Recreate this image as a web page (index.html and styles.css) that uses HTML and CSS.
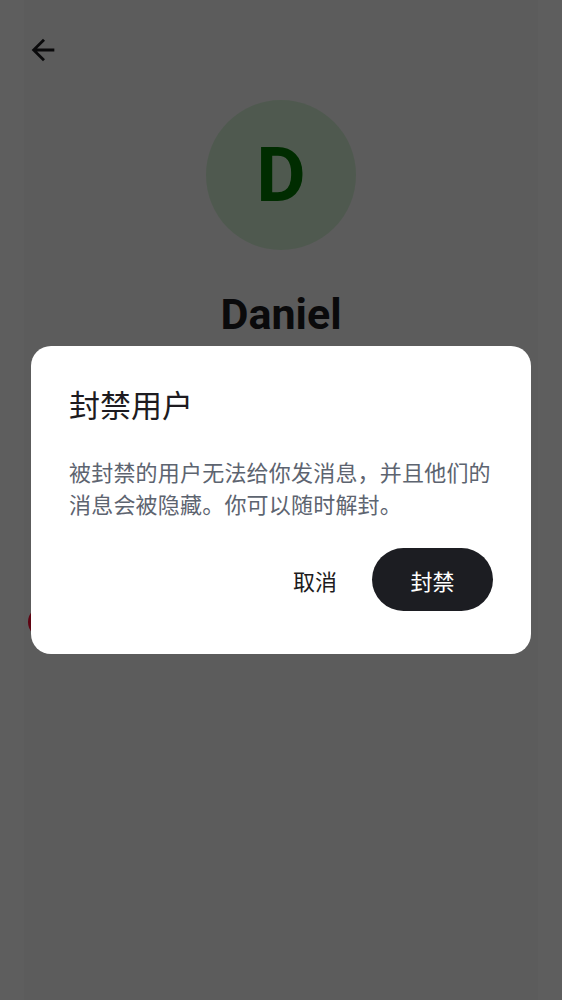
FILE: index.html
```html
<!DOCTYPE html>
<html lang="zh-CN">
<head>
<meta charset="utf-8">
<title>Daniel</title>
<link rel="stylesheet" href="styles.css">
</head>
<body>
<div class="page">
  <header class="topbar">
    <button class="back" aria-label="返回">
      <svg viewBox="0 0 24 24" width="34" height="34"><path d="M20 11H7.83l5.59-5.59L12 4l-8 8 8 8 1.41-1.41L7.83 13H20v-2z" fill="#1c1b1f"/></svg>
    </button>
  </header>
  <section class="profile">
    <div class="avatar">D</div>
    <h1 class="name">Daniel</h1>
  </section>
  <div class="actions">
    <div class="action danger">
      <span class="action-icon"></span>
      <span class="action-label">封禁用户</span>
    </div>
  </div>
</div>
<div class="scrim">
  <div class="dialog" role="dialog">
    <h2 class="dialog-title">封禁用户</h2>
    <p class="dialog-body">被封禁的用户无法给你发消息，并且他们的消息会被隐藏。你可以随时解封。</p>
    <div class="dialog-actions">
      <button class="btn-text">取消</button>
      <button class="btn-filled">封禁</button>
    </div>
  </div>
</div>
</body>
</html>
```
FILE: styles.css
```css
html, body {
  margin: 0;
  padding: 0;
}
body {
  background: #ffffff;
  font-family: Roboto, "Noto Sans CJK SC", sans-serif;
  height: 1000px;
  overflow: hidden;
}
.page {
  margin: 0 24px;
  min-height: 1000px;
  background: #f8f8f8;
}
.topbar {
  padding-top: 33px;
  padding-left: 2px;
  height: 34px;
}
.back {
  display: block;
  width: 34px;
  height: 34px;
  padding: 0;
  border: 0;
  background: none;
}
.back svg { display: block; }
.profile {
  display: flex;
  flex-direction: column;
  align-items: center;
  margin-top: 33px;
}
.avatar {
  width: 150px;
  height: 150px;
  border-radius: 50%;
  background: #d6f2d6;
  color: #007800;
  display: flex;
  align-items: center;
  justify-content: center;
  font-family: Roboto, sans-serif;
  font-weight: 700;
  font-size: 76px;
  line-height: 1;
}
.name {
  margin: 39px 0 0;
  font-family: Roboto, sans-serif;
  font-weight: 700;
  font-size: 43px;
  line-height: 50px;
  color: #1c1b1f;
}
.actions {
  margin-top: 267px;
}
.action {
  display: flex;
  align-items: center;
  gap: 16px;
  margin-left: 4px;
  height: 32px;
}
.action-icon {
  width: 32px;
  height: 32px;
  border-radius: 50%;
  background: #ff0a30;
}
.action-label {
  font-family: "Noto Sans CJK SC", sans-serif;
  font-size: 20px;
  color: #d0102a;
}
.scrim {
  position: fixed;
  inset: 0;
  background: rgba(0, 0, 0, 0.63);
  display: flex;
  align-items: center;
  justify-content: center;
}
.dialog {
  width: 500px;
  box-sizing: border-box;
  background: #ffffff;
  border-radius: 20px;
  padding: 38px 38px 43px;
  font-family: "Noto Sans CJK SC", sans-serif;
}
.dialog-title {
  margin: 0;
  font-size: 31px;
  line-height: 40px;
  font-weight: 400;
  color: #1d1b20;
}
.dialog-body {
  margin: 31px 0 0;
  font-size: 22px;
  letter-spacing: 0.2px;
  line-height: 32px;
  color: #5d6470;
}
.dialog-actions {
  display: flex;
  justify-content: flex-end;
  align-items: center;
  gap: 13px;
  margin-top: 29px;
}
.btn-text, .btn-filled {
  font-family: "Noto Sans CJK SC", sans-serif;
  font-size: 22px;
  border: 0;
  height: 63px;
  border-radius: 32px;
  cursor: pointer;
}
.btn-text {
  background: none;
  color: #1d1b20;
  padding: 0 22px;
}
.btn-filled {
  background: #1c1d22;
  color: #ffffff;
  width: 121px;
  padding: 0;
}
```
